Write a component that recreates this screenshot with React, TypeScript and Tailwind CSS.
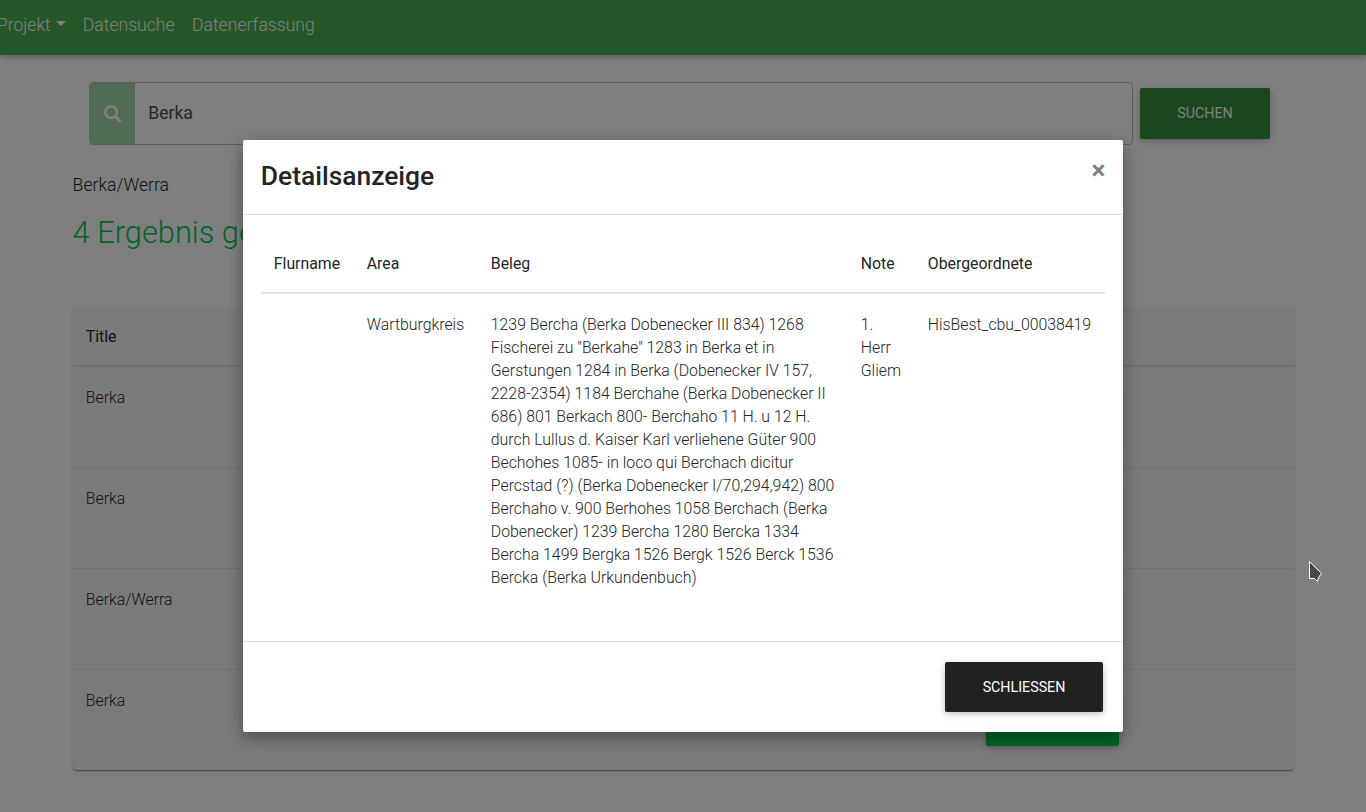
import React from "react";
import { FaSearch } from "react-icons/fa";

const rows = ["Berka", "Berka", "Berka/Werra", "Berka"];

const beleg = [
  "1239 Bercha (Berka Dobenecker III 834) 1268",
  'Fischerei zu "Berkahe" 1283 in Berka et in',
  "Gerstungen 1284 in Berka (Dobenecker IV 157,",
  "2228-2354) 1184 Berchahe (Berka Dobenecker II",
  "686) 801 Berkach 800- Berchaho 11 H. u 12 H.",
  "durch Lullus d. Kaiser Karl verliehene Güter 900",
  "Bechohes 1085- in loco qui Berchach dicitur",
  "Percstad (?) (Berka Dobenecker I/70,294,942) 800",
  "Berchaho v. 900 Berhohes 1058 Berchach (Berka",
  "Dobenecker) 1239 Bercha 1280 Bercka 1334",
  "Bercha 1499 Bergka 1526 Bergk 1526 Berck 1536",
  "Bercka (Berka Urkundenbuch)",
];

function NavBar() {
  return (
    <nav className="flex h-[55px] items-start bg-[#4caf50] pt-[12px] text-[17.6px] leading-[27px] text-white shadow-[0_2px_5px_rgba(0,0,0,0.16),0_2px_11px_rgba(0,0,0,0.12)]">
      <a className="-ml-[3.2px] flex w-[86px] items-center">
        Projekt
        <svg className="mb-[4px] ml-[5px]" width="10" height="5" viewBox="0 0 10 5">
          <path d="M0 0H10L5 5Z" fill="#fff" />
        </svg>
      </a>
      <a className="w-[109.2px]">Datensuche</a>
      <a>Datenerfassung</a>
    </nav>
  );
}

function SearchBar() {
  return (
    <div className="ml-4 flex items-start">
      <div className="flex h-[63px] w-[1044px] overflow-hidden rounded-[4px] border border-[#bdbdbd]">
        <span className="flex w-[45px] items-center justify-center border-r border-[#bdbdbd] bg-[#a5d6a7] pl-px text-white">
          <FaSearch size={17.6} />
        </span>
        <span className="flex items-center pl-[13.2px] text-[17.6px] font-normal text-[#495057]">Berka</span>
      </div>
      <button className="ml-[7px] mt-[6px] h-[51px] w-[130px] rounded-[2px] bg-[#388e3c] text-[14.26px] font-normal text-white shadow-[0_2px_5px_rgba(0,0,0,0.16),0_2px_11px_rgba(0,0,0,0.12)]">
        SUCHEN
      </button>
    </div>
  );
}

function Results() {
  return (
    <div className="mt-[46px] h-[463px] w-[1221px] rounded-[4px] bg-[#f7f7f7] text-[15.84px] leading-[23px] shadow-[0_2px_1px_-1px_rgba(0,0,0,0.24),0_1px_1px_rgba(0,0,0,0.16),0_1px_3px_rgba(0,0,0,0.16)]">
      <div className="h-[60px] border-b-2 border-[#dfe0e2] pl-[12.8px] pt-[18px] font-normal">Title</div>
      {rows.map((title, i) => (
        <div
          key={i}
          className="flex h-[101px] justify-between border-b border-[#e2e3e5] pl-[12.8px] pr-[175px] pt-[19px] last:border-b-0"
        >
          <span>{title}</span>
          <span className="mt-[6px] h-[51px] w-[133px] rounded-[2px] bg-[#00c851] shadow-[0_2px_5px_rgba(0,0,0,0.16),0_2px_11px_rgba(0,0,0,0.12)]" />
        </div>
      ))}
    </div>
  );
}

function DetailModal() {
  return (
    <div className="flex h-[592px] w-[880px] flex-col rounded-[2px] bg-white shadow-[0_6px_13px_rgba(0,0,0,0.2),0_5px_19px_rgba(0,0,0,0.2)]">
      <header className="flex h-[75px] items-start justify-between border-b border-[#dee2e6] pl-[17.8px] pr-[17.6px] pt-[16px]">
        <h4 className="text-[26.4px] font-medium leading-[40px]">Detailsanzeige</h4>
        <button className="mt-px text-[26.4px] font-bold leading-[26px] text-[#7f7f7f]">×</button>
      </header>
      <div className="h-[426px] px-[18px] pt-[19px] text-[15.84px] leading-[23px]">
        <div className="flex h-[60px] border-b-2 border-[#dee2e6] pl-[12.8px] pt-[18px] font-normal">
          <span className="w-[93px]">Flurname</span>
          <span className="w-[124px]">Area</span>
          <span className="w-[370px]">Beleg</span>
          <span className="w-[67px]">Note</span>
          <span>Obergeordnete</span>
        </div>
        <div className="flex pl-[12.8px] pt-[19px]">
          <span className="w-[93px]" />
          <span className="w-[124px]">Wartburgkreis</span>
          <span className="w-[370px] whitespace-pre">{beleg.join("\n")}</span>
          <span className="w-[67px] whitespace-pre">{"1.\nHerr\nGliem"}</span>
          <span>HisBest_cbu_00038419</span>
        </div>
      </div>
      <footer className="flex flex-1 items-start justify-end border-t border-[#dee2e6] pr-5 pt-5">
        <button className="h-[50px] w-[158px] rounded-[2px] bg-[#212121] pt-px text-[14.26px] font-normal text-white shadow-[0_2px_5px_rgba(0,0,0,0.16),0_2px_11px_rgba(0,0,0,0.12)]">
          SCHLIESSEN
        </button>
      </footer>
    </div>
  );
}

export default function App() {
  return (
    <div className="relative h-[812px] w-[1366px] overflow-hidden bg-white font-['Roboto',sans-serif] font-light text-[#212529]">
      <NavBar />
      <main className="pl-[73px] pt-[27px]">
        <SearchBar />
        <p className="-ml-[0.4px] mt-[27px] text-[17.6px] leading-[27px]">Berka/Werra</p>
        <h2 className="-ml-[0.4px] mt-[14px] text-[30.8px] leading-[40px] text-[#00c851]">4 Ergebnis gefunden</h2>
        <div className="pt-[8px]">
          <Results />
        </div>
      </main>
      <div className="absolute inset-0 flex items-start justify-center bg-black/50 pt-[140px]">
        <DetailModal />
      </div>
      <svg className="absolute left-[1308px] top-[560px]" width="16" height="24" viewBox="0 0 16 24">
        <path d="M1.5 1.5V18.5H6.5L9.5 21.5L10.5 17.5L13.5 13.5Z" fill="#484848" stroke="#fff" strokeWidth="1" />
      </svg>
    </div>
  );
}
